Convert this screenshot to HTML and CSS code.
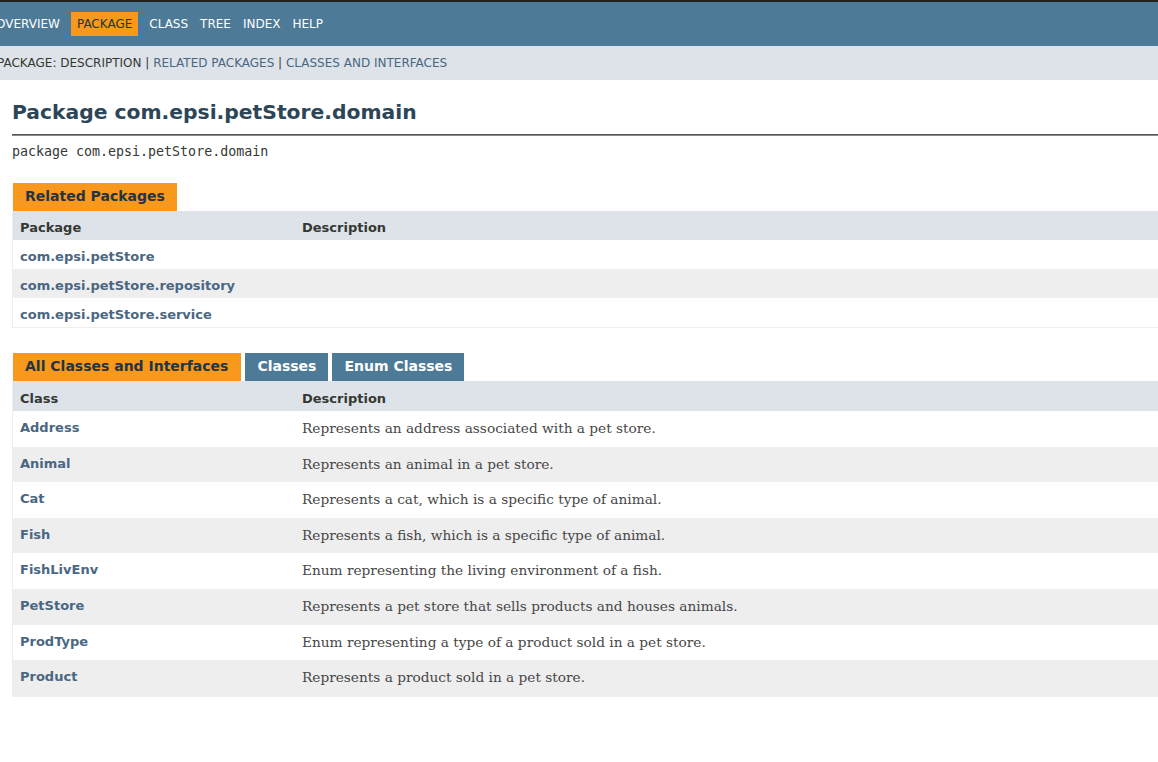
FILE: index.html
```html
<!DOCTYPE html>
<html lang="en">
<head>
<meta charset="utf-8">
<title>com.epsi.petStore.domain</title>
<link rel="stylesheet" href="styles.css">
</head>
<body>
<header class="flex-header">
  <nav>
    <div class="top-nav">
      <ul class="nav-list">
        <li><a href="#">Overview</a></li>
        <li class="nav-bar-cell1-rev">Package</li>
        <li>Class</li>
        <li><a href="#">Tree</a></li>
        <li><a href="#">Index</a></li>
        <li><a href="#">Help</a></li>
      </ul>
    </div>
    <div class="sub-nav">
      <ul class="sub-nav-list">
        <li>Package:&nbsp;</li>
        <li>Description&nbsp;|&nbsp;</li>
        <li><a href="#">Related Packages</a>&nbsp;|&nbsp;</li>
        <li><a href="#">Classes and Interfaces</a></li>
      </ul>
    </div>
  </nav>
</header>
<main>
  <div class="header">
    <h1 class="title">Package com.epsi.petStore.domain</h1>
  </div>
  <hr class="rule">
  <div class="package-signature">package <span class="element-name">com.epsi.petStore.domain</span></div>
  <section class="summary">
    <div class="caption"><span>Related Packages</span></div>
    <div class="summary-table">
      <div class="table-header">Package</div>
      <div class="table-header">Description</div>
      <div class="cell even"><a href="#">com.epsi.petStore</a></div>
      <div class="cell even"></div>
      <div class="cell odd"><a href="#">com.epsi.petStore.repository</a></div>
      <div class="cell odd"></div>
      <div class="cell even"><a href="#">com.epsi.petStore.service</a></div>
      <div class="cell even"></div>
    </div>
  </section>
  <section class="summary classes">
    <div class="table-tabs">
      <button class="tab active">All Classes and Interfaces</button>
      <button class="tab">Classes</button>
      <button class="tab">Enum Classes</button>
    </div>
    <div class="summary-table">
      <div class="table-header tall">Class</div>
      <div class="table-header tall">Description</div>
      <div class="cell even"><a href="#">Address</a></div>
      <div class="cell even"><div class="block">Represents an address associated with a pet store.</div></div>
      <div class="cell odd"><a href="#">Animal</a></div>
      <div class="cell odd"><div class="block">Represents an animal in a pet store.</div></div>
      <div class="cell even"><a href="#">Cat</a></div>
      <div class="cell even"><div class="block">Represents a cat, which is a specific type of animal.</div></div>
      <div class="cell odd"><a href="#">Fish</a></div>
      <div class="cell odd"><div class="block">Represents a fish, which is a specific type of animal.</div></div>
      <div class="cell even"><a href="#">FishLivEnv</a></div>
      <div class="cell even"><div class="block">Enum representing the living environment of a fish.</div></div>
      <div class="cell odd"><a href="#">PetStore</a></div>
      <div class="cell odd"><div class="block">Represents a pet store that sells products and houses animals.</div></div>
      <div class="cell even"><a href="#">ProdType</a></div>
      <div class="cell even"><div class="block">Enum representing a type of a product sold in a pet store.</div></div>
      <div class="cell odd"><a href="#">Product</a></div>
      <div class="cell odd"><div class="block">Represents a product sold in a pet store.</div></div>
    </div>
  </section>
</main>
</body>
</html>
```
FILE: styles.css
```css
html { overflow: hidden; }
body {
  margin: 0;
  padding: 0;
  background: #ffffff;
  color: #353833;
  font-family: "DejaVu Sans", Arial, Helvetica, sans-serif;
  font-size: 14px;
  line-height: 1.4;
}
a { text-decoration: none; color: #4A6782; }

.top-nav {
  background: #4D7A97;
  color: #ffffff;
  border-top: 2px solid #222222;
  padding-top: 10px;
  height: 34px;
  font-size: 12px;
  line-height: 14px;
}
.top-nav a { color: #ffffff; }
.nav-list {
  display: flex;
  list-style: none;
  margin: 0 0 0 -10px;
  padding: 0;
}
.nav-list li {
  padding: 5px 6px;
  text-transform: uppercase;
}
.nav-list .nav-bar-cell1-rev {
  background: #F8981D;
  color: #253441;
  margin: 0 5px;
}
.sub-nav {
  background: #dee3e9;
  font-size: 12px;
  line-height: 14px;
  padding: 5px 0 5px 0;
}
.sub-nav-list {
  display: flex;
  list-style: none;
  margin: 0 0 0 -3px;
  padding: 5px 0;
  text-transform: uppercase;
  white-space: pre;
}

main {
  padding: 0 0 0 12px;
}
.header { padding-top: 20px; }
.title {
  color: #2c4557;
  font-size: 20.3px;
  line-height: 24px;
  margin: 0;
}
.rule {
  margin: 10px -40px 0 0;
  border: 0;
  border-top: 1px solid #555555;
  border-bottom: 1px solid #8a8a8a;
  height: 0;
}
.package-signature {
  font-family: "DejaVu Sans Mono", monospace;
  font-size: 13.3px;
  line-height: 17px;
  margin-top: 7px;
  color: #353833;
}

.summary { margin-top: 23px; margin-right: -40px; }
.classes { margin-top: 25px; }
.caption {
  display: flex;
}
.caption span {
  background: #F8981D;
  color: #253441;
  font-weight: bold;
  padding: 5px 12px 7px 12px;
  height: 16px;
  line-height: 16px;
  white-space: nowrap;
  margin-left: 1px;
}
.table-tabs {
  display: flex;
  gap: 3px;
  padding-left: 1px;
}
.tab {
  border: none;
  font-family: inherit;
  font-size: 14px;
  font-weight: bold;
  line-height: 16px;
  height: 28px;
  padding: 5px 12px 7px 12px;
  background: #4D7A97;
  color: #ffffff;
  cursor: pointer;
}
.tab.active {
  background: #F8981D;
  color: #253441;
  padding-right: 13px;
}
.tab + .tab { margin-left: 1px; }
.summary-table {
  display: grid;
  grid-template-columns: 282px 1fr;
  border-left: 1px solid #eeeeee;
  border-right: 1px solid #eeeeee;
  border-bottom: 1px solid #eeeeee;
}
.table-header {
  background: #dee3e9;
  font-weight: bold;
  font-size: 13px;
  padding: 8px 3px 3px 7px;
  line-height: 18px;
}
.table-header.tall { padding-top: 9px; }
.cell {
  font-size: 13px;
  line-height: 18px;
  padding: 8px 3px 3px 7px;
}
.cell a { font-weight: bold; }
.even { background: #ffffff; }
.odd { background: #eeeeef; }
.block {
  font-family: "DejaVu Serif", Georgia, "Times New Roman", serif;
  font-size: 13.7px;
  line-height: 19.6px;
  color: #474747;
  margin: 0 10px 5px 0;
}
```
